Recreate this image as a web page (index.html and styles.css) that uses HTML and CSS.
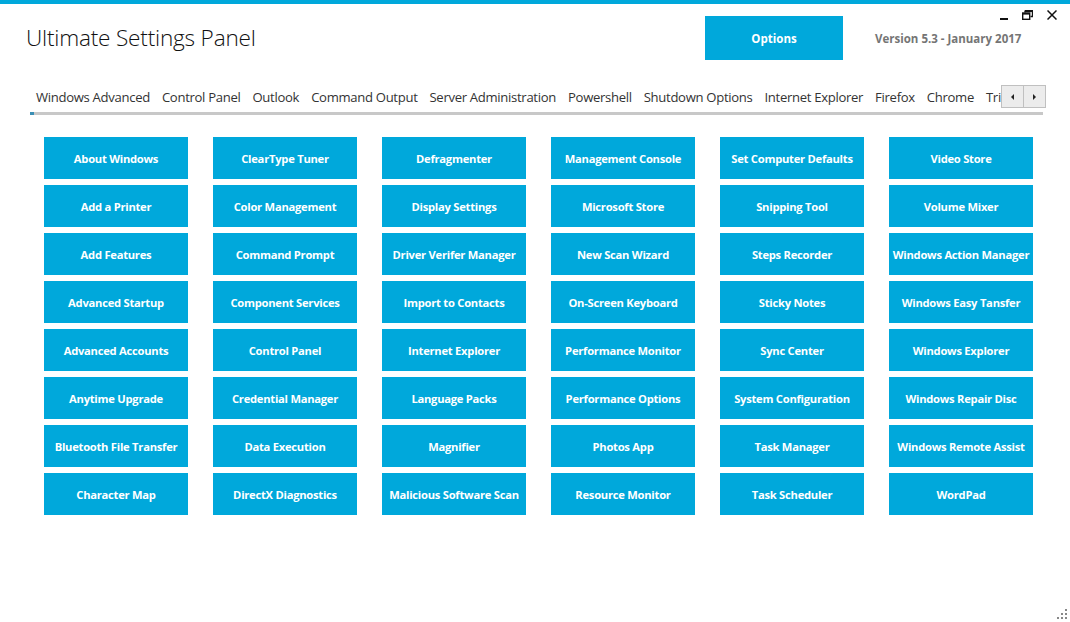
FILE: index.html
```html
<!DOCTYPE html>
<html lang="en">
<head>
    <meta charset="UTF-8">
    <title>Ultimate Settings Panel</title>
    <link rel="stylesheet" href="styles.css">
</head>
<body>
    <div class="topbar"></div>
    <div class="wincontrols">
        <span class="wc-min"></span>
        <svg class="wc-restore" width="11" height="10" viewBox="0 0 11 10"><path d="M3 0.5h7.5v6h-2M3 0.5v2" fill="none" stroke="#111" stroke-width="1.4"/><rect x="0.7" y="3" width="7" height="6.3" fill="none" stroke="#111" stroke-width="1.4"/><rect x="0.7" y="3" width="7" height="1.6" fill="#111"/><rect x="3" y="0.5" width="7.5" height="1.6" fill="#111"/></svg>
        <svg class="wc-close" width="10" height="10" viewBox="0 0 10 10"><path d="M0.5 0.5L9.5 9.5M9.5 0.5L0.5 9.5" stroke="#111" stroke-width="1.5"/></svg>
    </div>

    <div class="header">
        <h1>Ultimate Settings Panel</h1>
        <button class="options">Options</button>
        <div class="version">Version 5.3 - January 2017</div>
    </div>

    <div class="tabs">
        <div class="tabstrip">
            <span>Windows Advanced</span>
            <span>Control Panel</span>
            <span>Outlook</span>
            <span>Command Output</span>
            <span>Server Administration</span>
            <span>Powershell</span>
            <span>Shutdown Options</span>
            <span>Internet Explorer</span>
            <span>Firefox</span>
            <span>Chrome</span>
            <span>Tri</span>
        </div>
        <div class="scrollbtns">
            <span class="sb"><i class="tri left"></i></span>
            <span class="sb"><i class="tri right"></i></span>
        </div>
    </div>
    <div class="tabline"><span class="tabmark"></span></div>

    <div class="grid">
        <button>About Windows</button>
        <button>ClearType Tuner</button>
        <button>Defragmenter</button>
        <button>Management Console</button>
        <button>Set Computer Defaults</button>
        <button>Video Store</button>

        <button>Add a Printer</button>
        <button>Color Management</button>
        <button>Display Settings</button>
        <button>Microsoft Store</button>
        <button>Snipping Tool</button>
        <button>Volume Mixer</button>

        <button>Add Features</button>
        <button>Command Prompt</button>
        <button>Driver Verifer Manager</button>
        <button>New Scan Wizard</button>
        <button>Steps Recorder</button>
        <button>Windows Action Manager</button>

        <button>Advanced Startup</button>
        <button>Component Services</button>
        <button>Import to Contacts</button>
        <button>On-Screen Keyboard</button>
        <button>Sticky Notes</button>
        <button>Windows Easy Tansfer</button>

        <button>Advanced Accounts</button>
        <button>Control Panel</button>
        <button>Internet Explorer</button>
        <button>Performance Monitor</button>
        <button>Sync Center</button>
        <button>Windows Explorer</button>

        <button>Anytime Upgrade</button>
        <button>Credential Manager</button>
        <button>Language Packs</button>
        <button>Performance Options</button>
        <button>System Configuration</button>
        <button>Windows Repair Disc</button>

        <button>Bluetooth File Transfer</button>
        <button>Data Execution</button>
        <button>Magnifier</button>
        <button>Photos App</button>
        <button>Task Manager</button>
        <button>Windows Remote Assist</button>

        <button>Character Map</button>
        <button>DirectX Diagnostics</button>
        <button>Malicious Software Scan</button>
        <button>Resource Monitor</button>
        <button>Task Scheduler</button>
        <button>WordPad</button>
    </div>

    <div class="grip">
        <i style="right:3px;bottom:3px"></i>
        <i style="right:7px;bottom:3px"></i>
        <i style="right:11px;bottom:3px"></i>
        <i style="right:3px;bottom:7px"></i>
        <i style="right:7px;bottom:7px"></i>
        <i style="right:3px;bottom:11px"></i>
    </div>
</body>
</html>
```

FILE: styles.css
```css
html, body {
    margin: 0;
    padding: 0;
    background: #fff;
    font-family: "Open Sans", "Noto Sans", sans-serif;
    width: 1070px;
    height: 622px;
    overflow: hidden;
    position: relative;
}
.topbar {
    height: 4px;
    background: #00a8db;
}
.wincontrols {
    position: absolute;
    top: 10px;
    right: 13px;
    display: flex;
    align-items: center;
    gap: 14px;
}
.wc-min {
    display: block;
    width: 8px;
    height: 2px;
    background: #111;
    margin-top: 8px;
}
.header {
    display: flex;
    align-items: center;
    padding: 12px 0 0 26px;
    height: 44px;
}
.header h1 {
    flex: 1;
    margin: 0;
    font-weight: 300;
    font-size: 22.6px;
    color: #111;
    letter-spacing: -0.2px;
    position: relative;
    top: -1px;
}
.options {
    width: 138px;
    height: 44px;
    background: #00a8db;
    border: none;
    color: #fff;
    font-family: inherit;
    font-weight: 700;
    font-size: 11.5px;
}
.version {
    width: 227px;
    padding-left: 32px;
    box-sizing: border-box;
    color: #757575;
    font-weight: 700;
    font-size: 11.5px;
}
.tabs {
    display: flex;
    margin: 25px 0 0 30px;
    width: 1016px;
    height: 23px;
    align-items: center;
}
.tabstrip {
    width: 972px;
    overflow: hidden;
    display: flex;
    gap: 12px;
    white-space: nowrap;
    padding-left: 6px;
    box-sizing: border-box;
    font-size: 13.1px;
    color: #333;
    letter-spacing: -0.31px;
}
.scrollbtns {
    display: flex;
}
.sb {
    width: 21px;
    height: 21px;
    border: 1px solid #c0c0c0;
    background: #ececec;
    display: flex;
    align-items: center;
    justify-content: center;
}
.sb + .sb {
    border-left: none;
}
.tri {
    width: 0;
    height: 0;
    border-top: 3px solid transparent;
    border-bottom: 3px solid transparent;
}
.tri.left {
    border-right: 3px solid #222;
}
.tri.right {
    border-left: 3px solid #222;
}
.tabline {
    margin: 4px 0 0 30px;
    width: 1013px;
    height: 3px;
    background: #c8c8c8;
}
.tabmark {
    display: block;
    width: 4px;
    height: 3px;
    background: #3b8fb5;
}
.grid {
    display: grid;
    grid-template-columns: repeat(6, 144px);
    grid-auto-rows: 42px;
    column-gap: 25px;
    row-gap: 6px;
    padding: 22px 0 0 44px;
}
.grid button {
    background: #00a8db;
    border: none;
    color: #fff;
    font-family: inherit;
    font-weight: 700;
    font-size: 11.2px;
    padding: 0;
    white-space: nowrap;
    letter-spacing: -0.25px;
}
.grip {
    position: absolute;
    right: 0;
    bottom: 0;
    width: 16px;
    height: 16px;
}
.grip i {
    position: absolute;
    width: 2px;
    height: 2px;
    background: #888;
}
```
